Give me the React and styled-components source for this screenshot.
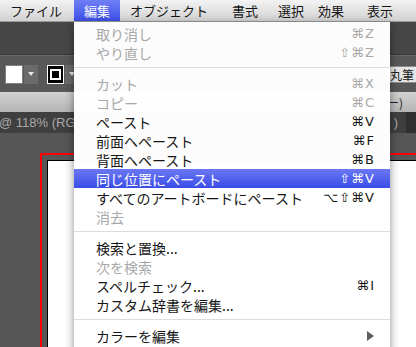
import React from "react"
import styled, { createGlobalStyle } from "styled-components"

const GlobalStyle = createGlobalStyle`
  html, body {
    margin: 0;
    padding: 0;
    background: #565656;
  }
  body {
    font-family: "Noto Sans CJK JP", sans-serif;
  }
`

const Screen = styled.div`
  position: relative;
  width: 416px;
  height: 347px;
  overflow: hidden;
  display: flex;
  flex-direction: column;
  background: #565656;
`

const MenuBar = styled.div`
  flex: none;
  height: 22px;
  box-sizing: border-box;
  display: flex;
  align-items: stretch;
  background: linear-gradient(#f3f3f3, #d2d2d2);
  border-bottom: 1px solid #9a9a9a;
`

const MenuTitle = styled.div`
  display: flex;
  align-items: center;
  margin-left: ${(p) => p.$gap}px;
  padding: ${(p) => (p.$active ? "0 10px" : "0")};
  font-size: 13px;
  color: ${(p) => (p.$active ? "#fff" : "#151515")};
  background: ${(p) =>
    p.$active ? "linear-gradient(#6f7ff6, #3d4fe7)" : "transparent"};
  white-space: nowrap;
`

const PanelStrip = styled.div`
  flex: none;
  height: 33px;
  box-sizing: border-box;
  background: #474747;
  border-bottom: 1px solid #3a3a3a;
`

const ControlBar = styled.div`
  flex: none;
  height: 37px;
  box-sizing: border-box;
  display: flex;
  align-items: center;
  padding-left: 5px;
  background: #585858;
  border-top: 1px solid #666;
`

const SwatchGroup = styled.div`
  display: flex;
  align-items: stretch;
  gap: 1px;
  margin-right: 9px;
`

const FillSwatch = styled.div`
  width: 18px;
  height: 19px;
  box-sizing: border-box;
  background: #fff;
  border: 1px solid #808080;
`

const StrokeSwatch = styled.div`
  width: 17px;
  height: 19px;
  box-sizing: border-box;
  background: #000;
  border: 1px solid #fff;
  display: flex;
  align-items: center;
  justify-content: center;

  &::after {
    content: "";
    width: 7px;
    height: 7px;
    border: 2px solid #fff;
    background: #000;
  }
`

const DropButton = styled.div`
  width: 14px;
  height: 19px;
  background: #6b6b6b;
  display: flex;
  align-items: center;
  justify-content: center;

  &::after {
    content: "";
    border-left: 3px solid transparent;
    border-right: 3px solid transparent;
    border-top: 4px solid #e8e8e8;
  }
`

const BrushField = styled.div`
  margin-left: auto;
  margin-right: -4px;
  width: 34px;
  height: 17px;
  box-sizing: border-box;
  background: #e6e6e6;
  border: 1px solid #8c8c8c;
  font-size: 12px;
  line-height: 15px;
  color: #222;
  padding-left: 3px;
  white-space: nowrap;
  overflow: hidden;
`

const ActiveTabBar = styled.div`
  flex: none;
  height: 20px;
  display: flex;
  align-items: center;
  justify-content: flex-end;
  padding-right: 13px;
  background: linear-gradient(#d2d2d2, #b4b4b4);
  font-size: 12px;
  color: #222;
  white-space: nowrap;
`

const DocTabBar = styled.div`
  flex: none;
  height: 21px;
  display: flex;
  align-items: center;
  justify-content: space-between;
  background: #3f3f3f;
  font-family: "Liberation Sans", "Noto Sans CJK JP", sans-serif;
  font-size: 13px;
  color: #a9a9a9;
  white-space: nowrap;
  overflow: hidden;
`

const DocTitle = styled.span`
  margin-left: -1px;
`

const DocTail = styled.span`
  display: flex;
  align-items: center;
  height: 100%;
  gap: 8px;

  &::after {
    content: "";
    width: 10px;
    height: 100%;
    background: #2f2f2f;
  }
`

const Canvas = styled.div`
  flex: 1;
  display: flex;
  padding: 20px 0 0 40px;
  background: #565656;
`

const Bleed = styled.div`
  flex: 1;
  display: flex;
  padding: 5px 0 0 5px;
  border-top: 2px solid #f00;
  border-left: 2px solid #f00;
`

const Artboard = styled.div`
  flex: 1;
  background: #fff;
  border-top: 1px solid #000;
  border-left: 1px solid #000;
`

const Dropdown = styled.div`
  position: absolute;
  top: 22px;
  left: 74px;
  width: 316px;
  bottom: -10px;
  padding-top: 2px;
  box-sizing: border-box;
  background: rgba(255, 255, 255, 0.985);
  box-shadow: 0 3px 9px rgba(0, 0, 0, 0.45);
`

const Item = styled.div`
  height: 19px;
  display: flex;
  align-items: center;
  justify-content: space-between;
  padding: 0 15px 0 22px;
  font-size: 14px;
  color: ${(p) => (p.$active ? "#fff" : p.$disabled ? "#a8a8a8" : "#161616")};
  background: ${(p) =>
    p.$active ? "linear-gradient(#6a78f4, #3b4ce6)" : "transparent"};
  white-space: nowrap;
`

const Shortcut = styled.span`
  font-family: "DejaVu Sans", sans-serif;
  font-size: 13px;
  letter-spacing: 1px;
`

const Separator = styled.div`
  margin: 5px 0 6px;
  border-top: 1px solid #dcdcdc;
`

const SubArrow = styled.span`
  width: 0;
  height: 0;
  margin-right: 1px;
  border-top: 5px solid transparent;
  border-bottom: 5px solid transparent;
  border-left: 7px solid #5e5e5e;
`

const titles = [
  { label: "ファイル", gap: 10 },
  { label: "編集", gap: 12, active: true },
  { label: "オブジェクト", gap: 10 },
  { label: "書式", gap: 24 },
  { label: "選択", gap: 20 },
  { label: "効果", gap: 14 },
  { label: "表示", gap: 23 },
]

const menu = [
  { label: "取り消し", key: "⌘Z", disabled: true },
  { label: "やり直し", key: "⇧⌘Z", disabled: true },
  "sep",
  { label: "カット", key: "⌘X", disabled: true },
  { label: "コピー", key: "⌘C", disabled: true },
  { label: "ペースト", key: "⌘V" },
  { label: "前面へペースト", key: "⌘F" },
  { label: "背面へペースト", key: "⌘B" },
  { label: "同じ位置にペースト", key: "⇧⌘V", active: true },
  { label: "すべてのアートボードにペースト", key: "⌥⇧⌘V" },
  { label: "消去", disabled: true },
  "sep",
  { label: "検索と置換..." },
  { label: "次を検索", disabled: true },
  { label: "スペルチェック...", key: "⌘I" },
  { label: "カスタム辞書を編集..." },
  "sep",
  { label: "カラーを編集", submenu: true },
]

export default function App() {
  return (
    <>
      <GlobalStyle />
      <Screen>
        <MenuBar>
          {titles.map((t) => (
            <MenuTitle key={t.label} $gap={t.gap} $active={t.active}>
              {t.label}
            </MenuTitle>
          ))}
        </MenuBar>
        <PanelStrip />
        <ControlBar>
          <SwatchGroup>
            <FillSwatch />
            <DropButton />
          </SwatchGroup>
          <SwatchGroup>
            <StrokeSwatch />
            <DropButton />
          </SwatchGroup>
          <BrushField>丸筆</BrushField>
        </ControlBar>
        <ActiveTabBar>ー)</ActiveTabBar>
        <DocTabBar>
          <DocTitle>@ 118% (RG</DocTitle>
          <DocTail>)</DocTail>
        </DocTabBar>
        <Canvas>
          <Bleed>
            <Artboard />
          </Bleed>
        </Canvas>

        <Dropdown>
          {menu.map((m, i) =>
            m === "sep" ? (
              <Separator key={i} />
            ) : (
              <Item key={i} $active={m.active} $disabled={m.disabled}>
                <span>{m.label}</span>
                {m.key && <Shortcut>{m.key}</Shortcut>}
                {m.submenu && <SubArrow />}
              </Item>
            )
          )}
        </Dropdown>
      </Screen>
    </>
  )
}
